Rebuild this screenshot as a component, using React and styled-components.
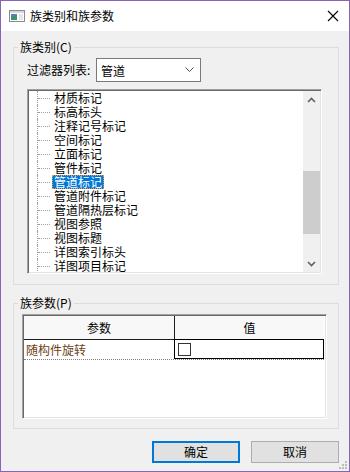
import React from 'react';
import styled, { createGlobalStyle } from 'styled-components';

const GlobalStyle = createGlobalStyle`
  html, body { margin: 0; padding: 0; background: #fff; }
  * { box-sizing: border-box; }
`;

const FONT = `"Noto Sans CJK SC", "Liberation Sans", sans-serif`;

const Window = styled.div`
  position: relative;
  width: 350px;
  height: 472px;
  border: 1px solid #8764b8;
  display: flex;
  flex-direction: column;
  font-family: ${FONT};
  font-size: 12px;
  color: #000;
  background: #f0f0f0;
`;

const TitleBar = styled.div`
  height: 30px;
  background: #fff;
  display: flex;
  align-items: center;
  padding: 0 10px 0 8px;
  flex-shrink: 0;
`;

const TitleText = styled.span`
  flex: 1;
  margin-left: 5px;
  font-size: 12px;
  line-height: 14px;
`;

const Body = styled.div`
  flex: 1;
  padding: 9px 10px 0 12px;
  display: flex;
  flex-direction: column;
`;

const Group = styled.fieldset`
  margin: ${p => p.$top || 0}px 0 0 0;
  padding: 0;
  border: 1px solid #dcdcdc;
  min-width: 0;
`;

const Legend = styled.legend`
  margin-left: 4px;
  padding: 0 2px;
  font-size: 12px;
  line-height: 14px;
`;

const GroupInner = styled.div`
  padding: ${p => p.$pad};
`;

const FilterRow = styled.div`
  display: flex;
  align-items: center;
  height: 24px;
`;

const FilterLabel = styled.span`
  width: 69px;
  line-height: 14px;
`;

const Select = styled.div`
  width: 105px;
  height: 24px;
  border: 1px solid #7a7a7a;
  background: #fff;
  display: flex;
  align-items: center;
  justify-content: space-between;
  padding: 0 6px 0 4px;
  font-size: 12px;
`;

const ListBox = styled.div`
  margin-top: 7px;
  width: 295px;
  height: 185px;
  border: 1px solid;
  border-color: #a0a0a0 #fff #fff #a0a0a0;
  box-shadow: inset 1px 1px 0 #696969, inset -1px -1px 0 #e3e3e3;
  background: #fff;
  display: flex;
  padding: 1px;
`;

const Tree = styled.div`
  flex: 1;
  overflow: hidden;
  padding-left: 8px;
`;

const TreeRow = styled.div`
  display: flex;
  align-items: center;
  height: 14px;
`;

const Guide = styled.span`
  position: relative;
  width: 15px;
  height: 14px;
  border-left: 1px dotted #a0a0a0;
  flex-shrink: 0;
  &::after {
    content: '';
    position: absolute;
    left: 0;
    right: 2px;
    top: 7px;
    border-top: 1px dotted #a0a0a0;
  }
`;

const ItemLabel = styled.span`
  padding: 0 2px;
  line-height: 14px;
  white-space: nowrap;
  background: ${p => (p.$selected ? '#0078d7' : 'transparent')};
  color: ${p => (p.$selected ? '#fff' : '#000')};
  outline: ${p => (p.$selected ? '1px dotted #f39c3a' : 'none')};
  outline-offset: -1px;
`;

const ScrollBar = styled.div`
  width: 17px;
  background: #f0f0f0;
  display: flex;
  flex-direction: column;
  align-items: center;
`;

const ScrollArrow = styled.div`
  height: 17px;
  width: 100%;
  display: flex;
  align-items: center;
  justify-content: center;
`;

const ScrollTrack = styled.div`
  flex: 1;
  width: 100%;
  display: flex;
  flex-direction: column;
  justify-content: flex-start;
  padding-top: 63px;
`;

const Thumb = styled.div`
  height: 63px;
  width: 100%;
  background: #cdcdcd;
`;

const Grid = styled.div`
  height: 105px;
  border: 1px solid;
  border-color: #a0a0a0 #fff #fff #a0a0a0;
  box-shadow: inset 1px 1px 0 #696969, inset -1px -1px 0 #e3e3e3;
  background: #fff;
  padding: 1px 2px 2px 1px;
`;

const HeaderRow = styled.div`
  display: grid;
  grid-template-columns: 151px 1fr;
  height: 24px;
  background: #f8f8f8;
  border-bottom: 1px solid #1e1e1e;
`;

const HeaderCell = styled.div`
  display: flex;
  align-items: center;
  justify-content: center;
  border-right: ${p => (p.$last ? 'none' : '1px solid #1e1e1e')};
  line-height: 14px;
`;

const DataRow = styled.div`
  display: grid;
  grid-template-columns: 150px 1fr;
  height: 20px;
  border-bottom: 1px dotted #808080;
`;

const NameCell = styled.div`
  display: flex;
  align-items: center;
  padding-left: 2px;
  color: #6b3f12;
  line-height: 14px;
`;

const ValueCell = styled.div`
  display: flex;
  align-items: center;
  padding-left: 3px;
  border: 1px solid #000;
  margin-top: -1px;
`;

const CheckBox = styled.span`
  width: 13px;
  height: 13px;
  border: 1px solid #333;
  background: #fff;
`;

const ButtonRow = styled.div`
  display: flex;
  justify-content: flex-end;
  gap: 11px;
  margin-top: 12px;
`;

const Button = styled.button`
  width: 88px;
  height: 22px;
  font-family: ${FONT};
  font-size: 12px;
  background: #e1e1e1;
  color: #000;
  border: ${p => (p.$default ? '2px solid #0078d7' : '1px solid #adadad')};
  padding: 0;
  line-height: 14px;
`;

const Grip = styled.svg`
  position: absolute;
  right: 2px;
  bottom: 2px;
`;

const items = [
  '材质标记',
  '标高标头',
  '注释记号标记',
  '空间标记',
  '立面标记',
  '管件标记',
  '管道标记',
  '管道附件标记',
  '管道隔热层标记',
  '视图参照',
  '视图标题',
  '详图索引标头',
  '详图项目标记',
];

const AppIcon = () => (
  <svg width="16" height="14" viewBox="0 0 16 14">
    <rect x="0.5" y="1.5" width="15" height="11" fill="#fff" stroke="#8a8a8a" />
    <rect x="1" y="2" width="14" height="2" fill="#d8d8d8" />
    <rect x="2" y="5" width="6" height="6" fill="#3f8f7a" />
    <rect x="2" y="5" width="6" height="2" fill="#5a7fb0" />
    <rect x="10" y="5" width="4" height="6" fill="#e6e6e6" />
  </svg>
);

export default function App() {
  return (
    <>
      <GlobalStyle />
      <Window>
        <TitleBar>
          <AppIcon />
          <TitleText>族类别和族参数</TitleText>
          <svg width="12" height="12" viewBox="0 0 12 12">
            <path d="M1 1 L11 11 M11 1 L1 11" stroke="#000" strokeWidth="1.1" />
          </svg>
        </TitleBar>
        <Body>
          <Group>
            <Legend>族类别(C)</Legend>
            <GroupInner $pad="4px 0 10px 13px">
              <FilterRow>
                <FilterLabel>过滤器列表:</FilterLabel>
                <Select>
                  <span>管道</span>
                  <svg width="9" height="6" viewBox="0 0 9 6">
                    <path d="M0.5 0.5 L4.5 4.5 L8.5 0.5" fill="none" stroke="#555" />
                  </svg>
                </Select>
              </FilterRow>
              <ListBox>
                <Tree>
                  {items.map(name => (
                    <TreeRow key={name}>
                      <Guide />
                      <ItemLabel $selected={name === '管道标记'}>{name}</ItemLabel>
                    </TreeRow>
                  ))}
                </Tree>
                <ScrollBar>
                  <ScrollArrow>
                    <svg width="9" height="6" viewBox="0 0 9 6">
                      <path d="M1 5 L4.5 1.5 L8 5" fill="none" stroke="#606060" strokeWidth="1.6" />
                    </svg>
                  </ScrollArrow>
                  <ScrollTrack>
                    <Thumb />
                  </ScrollTrack>
                  <ScrollArrow>
                    <svg width="9" height="6" viewBox="0 0 9 6">
                      <path d="M1 1 L4.5 4.5 L8 1" fill="none" stroke="#606060" strokeWidth="1.6" />
                    </svg>
                  </ScrollArrow>
                </ScrollBar>
              </ListBox>
            </GroupInner>
          </Group>

          <Group $top={11}>
            <Legend>族参数(P)</Legend>
            <GroupInner $pad="4px 11px 9px 8px">
              <Grid>
                <HeaderRow>
                  <HeaderCell>参数</HeaderCell>
                  <HeaderCell $last>值</HeaderCell>
                </HeaderRow>
                <DataRow>
                  <NameCell>随构件旋转</NameCell>
                  <ValueCell>
                    <CheckBox />
                  </ValueCell>
                </DataRow>
              </Grid>
            </GroupInner>
          </Group>

          <ButtonRow>
            <Button $default>确定</Button>
            <Button>取消</Button>
          </ButtonRow>
        </Body>
        <Grip width="8" height="8" viewBox="0 0 8 8">
          <rect x="6" y="0" width="2" height="2" fill="#bcbcbc" />
          <rect x="3" y="3" width="2" height="2" fill="#bcbcbc" />
          <rect x="6" y="3" width="2" height="2" fill="#bcbcbc" />
          <rect x="0" y="6" width="2" height="2" fill="#bcbcbc" />
          <rect x="3" y="6" width="2" height="2" fill="#bcbcbc" />
          <rect x="6" y="6" width="2" height="2" fill="#bcbcbc" />
        </Grip>
      </Window>
    </>
  );
}
